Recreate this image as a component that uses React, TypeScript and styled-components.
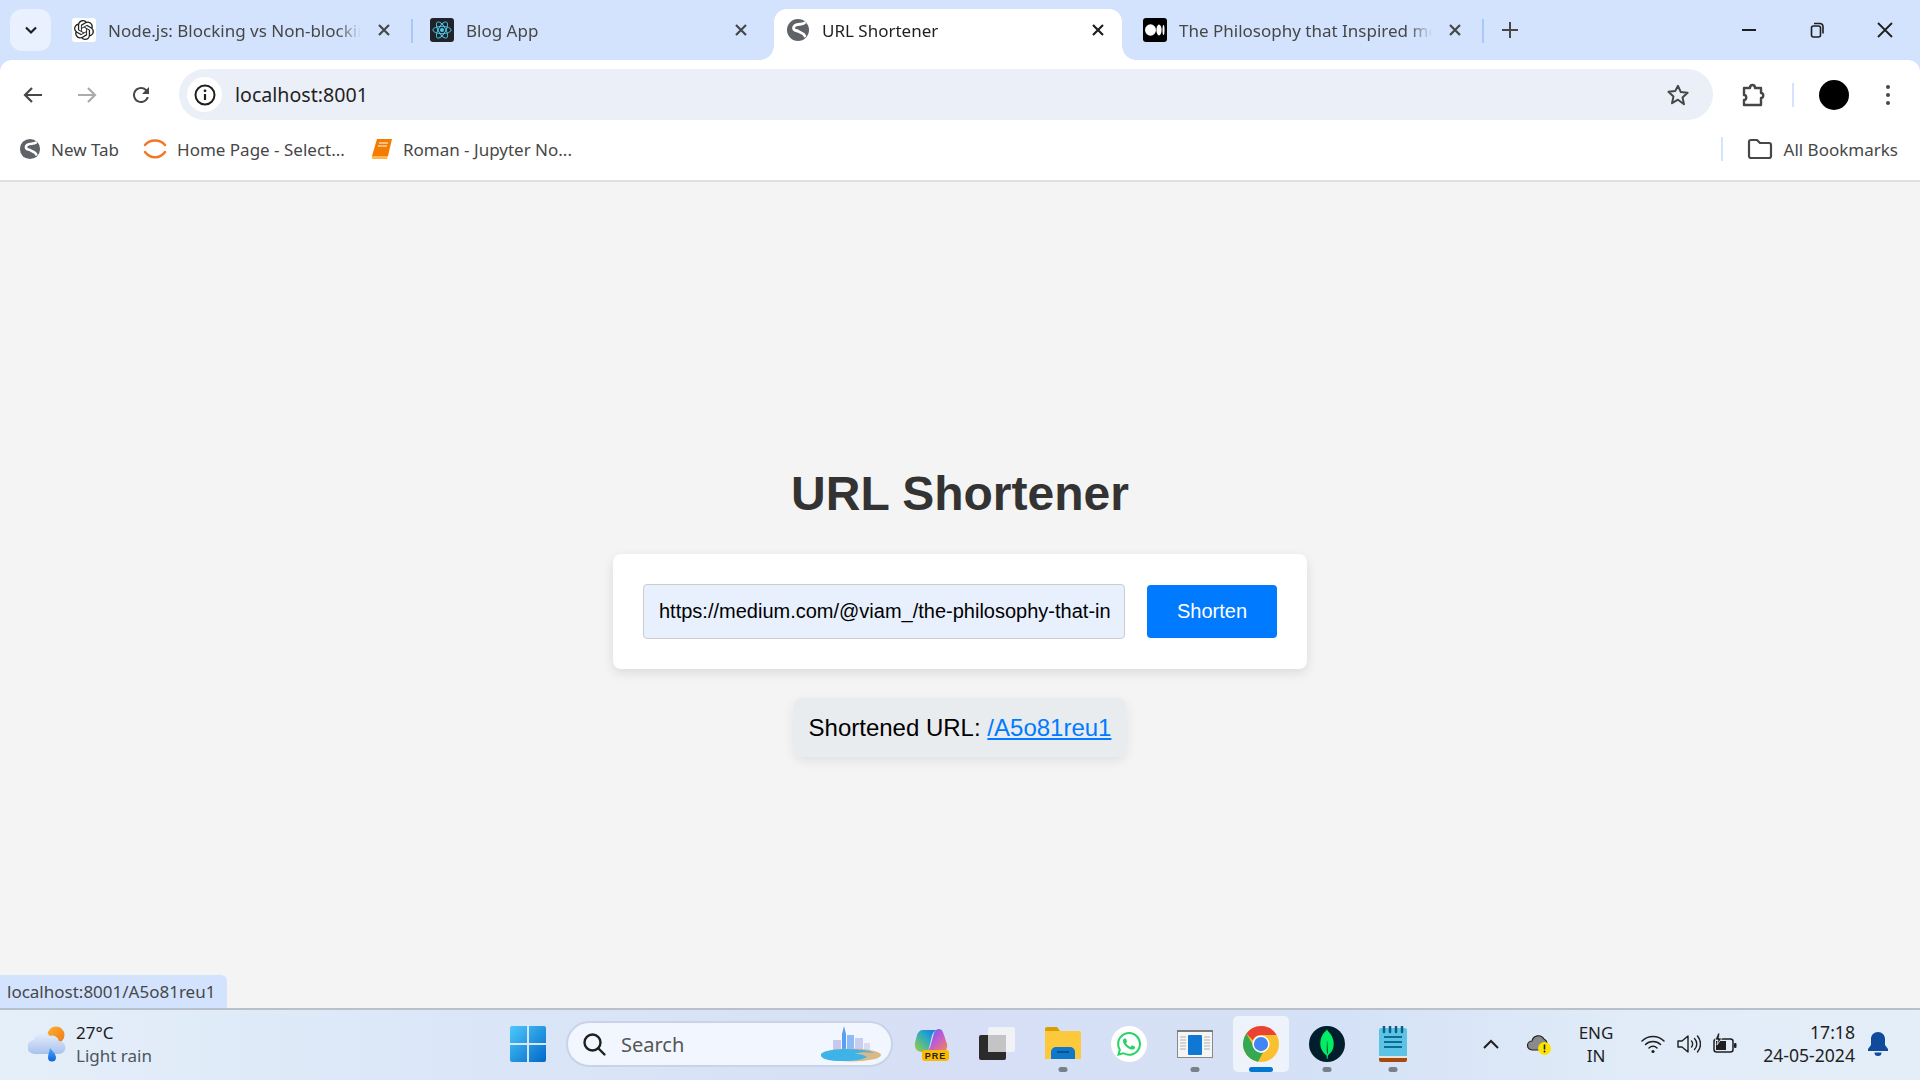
import { ReactNode } from 'react'
import styled, { createGlobalStyle } from 'styled-components'
import { SiOpenai, SiMongodb, SiWhatsapp } from 'react-icons/si'

const UI_FONT = `"Noto Sans", "Open Sans", sans-serif`

const GlobalStyle = createGlobalStyle`
  html, body {
    margin: 0;
    padding: 0;
    height: 100%;
    overflow: hidden;
  }
  * {
    box-sizing: border-box;
  }
`

const Screen = styled.div`
  width: 1920px;
  height: 1080px;
  display: flex;
  flex-direction: column;
  background: #d3e3fd;
  font-family: ${UI_FONT};
`

const TabStrip = styled.div`
  height: 60px;
  display: flex;
  align-items: flex-end;
  padding-left: 60px;
  position: relative;
  flex-shrink: 0;
`

const TabSearchButton = styled.div`
  position: absolute;
  left: 10px;
  top: 9px;
  width: 41px;
  height: 42px;
  border-radius: 12px;
  background: #e9f0fe;
  display: flex;
  align-items: center;
  justify-content: center;
`

const FaviconBox = styled.div<{ $bg: string }>`
  width: 24px;
  height: 24px;
  border-radius: 3px;
  background: ${({ $bg }) => $bg};
  display: flex;
  align-items: center;
  justify-content: center;
  flex-shrink: 0;
`

const Tab = styled.div<{ $active?: boolean; $width: number; $left: number; $right: number; $sep?: boolean }>`
  position: relative;
  width: ${({ $width }) => $width}px;
  height: 51px;
  flex-shrink: 0;
  display: flex;
  align-items: center;
  gap: 12px;
  padding: 0 ${({ $right }) => $right}px 9px ${({ $left }) => $left}px;
  background: ${({ $active }) => ($active ? '#fff' : 'transparent')};
  border-radius: 13px 13px 0 0;

  &::before {
    content: '';
    display: ${({ $sep }) => ($sep ? 'block' : 'none')};
    position: absolute;
    right: 0;
    top: 10px;
    width: 2px;
    height: 24px;
    background: #a8c7fa;
  }

  ${({ $active }) =>
    $active &&
    `
    &::before, &::after {
      content: '';
      display: block;
      position: absolute;
      bottom: 0;
      top: auto;
      width: 14px;
      height: 14px;
      background: radial-gradient(circle at 0 0, transparent 13.5px, #fff 14px);
    }
    &::before { left: -14px; right: auto; }
    &::after {
      right: -14px;
      background: radial-gradient(circle at 100% 0, transparent 13.5px, #fff 14px);
    }
  `}
`

const TabTitle = styled.div<{ $active?: boolean }>`
  flex: 1;
  min-width: 0;
  margin-right: 4px;
  padding-top: 2px;
  overflow: hidden;
  white-space: nowrap;
  font-size: 17px;
  line-height: 24px;
  color: ${({ $active }) => ($active ? '#1f1f1f' : '#474747')};
  mask-image: linear-gradient(to left, transparent 0, #000 24px);
`

const NewTabButton = styled.div`
  width: 26px;
  height: 51px;
  margin-left: 13px;
  padding-bottom: 9px;
  display: flex;
  align-items: center;
  justify-content: center;
`

const WindowControls = styled.div`
  margin-left: auto;
  padding-right: 1px;
  display: flex;
  align-self: stretch;
`

const WindowButton = styled.div`
  width: 68px;
  display: flex;
  align-items: center;
  justify-content: center;
`

const Toolbar = styled.div`
  height: 60px;
  flex-shrink: 0;
  background: #fff;
  border-radius: 12px 12px 0 0;
  display: flex;
  align-items: center;
  padding: 9px 0 0 11px;
`

const NavButton = styled.div`
  width: 44px;
  height: 44px;
  margin-right: 10px;
  display: flex;
  align-items: center;
  justify-content: center;
`

const Omnibox = styled.div`
  width: 1534px;
  height: 51px;
  margin-left: 6px;
  border-radius: 26px;
  background: #ebeff8;
  display: flex;
  align-items: center;
  padding: 0 23px 0 8px;
`

const InfoChip = styled.div`
  width: 35px;
  height: 35px;
  border-radius: 50%;
  background: #fff;
  display: flex;
  align-items: center;
  justify-content: center;
`

const AddressText = styled.div`
  flex: 1;
  margin-left: 13px;
  font-size: 19.6px;
  color: #1f1f1f;
`

const ExtensionSlot = styled.div`
  width: 26px;
  margin-left: 28px;
  display: flex;
`

const ToolbarDivider = styled.div`
  width: 2px;
  height: 24px;
  margin-left: 25px;
  background: #d3e3fd;
`

const Avatar = styled.div`
  width: 30px;
  height: 30px;
  margin-left: 25px;
  border-radius: 50%;
  background: #000;
`

const KebabMenu = styled.div`
  margin-left: 37px;
  display: flex;
  flex-direction: column;
  gap: 4px;

  i {
    display: block;
    width: 4px;
    height: 4px;
    border-radius: 50%;
    background: #474747;
  }
`

const BookmarksBar = styled.div`
  height: 62px;
  flex-shrink: 0;
  background: #fff;
  border-bottom: 2px solid #e0e0e0;
  display: flex;
  align-items: center;
  padding: 0 22px 2px 19px;
  gap: 24px;
`

const Bookmark = styled.div<{ $offset?: number }>`
  display: flex;
  align-items: center;
  gap: 10px;
  margin-left: ${({ $offset }) => $offset ?? 0}px;
  font-size: 17px;
  color: #474747;
  white-space: nowrap;
`

const AllBookmarks = styled(Bookmark)`
  margin-left: auto;
  gap: 11px;
  padding-left: 24px;
  border-left: 2px solid #d3e3fd;
`

const Content = styled.main`
  flex: 1;
  position: relative;
  background: #f4f4f4;
  display: flex;
  flex-direction: column;
  align-items: center;
  padding-top: 284px;
  font-family: 'Liberation Sans', Arial, sans-serif;
`

const Heading = styled.h1`
  margin: 0 0 33px;
  font-size: 48px;
  line-height: 55px;
  font-weight: 700;
  color: #333;
`

const FormCard = styled.div`
  width: 694px;
  height: 115px;
  padding: 30px;
  background: #fff;
  border-radius: 8px;
  box-shadow: 0 4px 12px rgba(0, 0, 0, 0.1);
  display: flex;
  align-items: center;
  justify-content: space-between;
`

const UrlInput = styled.input`
  width: 482px;
  height: 55px;
  padding: 0 14px 0 15px;
  border: 1px solid #ccc;
  border-radius: 4px;
  background: #e8f0fe;
  font-family: inherit;
  font-size: 20px;
  color: #000;
  outline: none;
`

const ShortenButton = styled.button`
  width: 130px;
  height: 53px;
  border: 0;
  border-radius: 4px;
  background: #007bff;
  color: #fff;
  font-family: inherit;
  font-size: 20px;
`

const ResultBox = styled.div`
  margin-top: 29px;
  height: 59px;
  padding: 0 15px;
  display: flex;
  align-items: center;
  gap: 0.28em;
  background: #e9ecef;
  border-radius: 8px;
  box-shadow: 0 4px 12px rgba(0, 0, 0, 0.08);
  font-size: 24px;
  color: #000;
`

const ResultLink = styled.a`
  color: #007bff;
`

const StatusBubble = styled.div`
  position: absolute;
  left: 0;
  bottom: 0;
  width: 227px;
  height: 33px;
  padding-left: 7px;
  background: #d3e3fd;
  border-radius: 0 6px 0 0;
  font-family: ${UI_FONT};
  font-size: 17px;
  line-height: 34px;
  color: #474747;
  white-space: nowrap;
`

const Taskbar = styled.footer`
  height: 72px;
  flex-shrink: 0;
  border-top: 2px solid #b9c0ca;
  padding-bottom: 2px;
  background: linear-gradient(90deg, #e5eff9 0%, #dae6f8 25%, #d6dff5 50%, #d5e1f6 70%, #e1ecf8 85%, #e3eef9 100%);
  display: flex;
  align-items: center;
`

const Weather = styled.div`
  width: 500px;
  padding-left: 28px;
  display: flex;
  align-items: center;
  gap: 10px;
`

const WeatherText = styled.div`
  display: flex;
  flex-direction: column;
  line-height: 23px;
  font-size: 17px;
  margin-bottom: 1px;
`

const Temperature = styled.span`
  color: #1a1a1a;
`

const Condition = styled.span`
  color: #4c5560;
`

const TaskSlot = styled.div<{ $active?: boolean }>`
  position: relative;
  width: 56px;
  height: 56px;
  border-radius: 5px;
  display: flex;
  align-items: center;
  justify-content: center;
  background: ${({ $active }) => ($active ? 'rgba(255, 255, 255, 0.6)' : 'transparent')};
`

const RunningMark = styled.span<{ $active?: boolean }>`
  position: absolute;
  bottom: 0;
  left: 50%;
  transform: translateX(-50%);
  width: ${({ $active }) => ($active ? 24 : 9)}px;
  height: 5px;
  border-radius: 3px;
  background: ${({ $active }) => ($active ? '#0078d4' : '#7a7f8c')};
`

const SearchBox = styled.div`
  width: 327px;
  height: 46px;
  margin-left: 10px;
  border-radius: 23px;
  background: #f2f6fe;
  border: 2px solid #c9d3e8;
  display: flex;
  align-items: center;
  padding: 0 10px 0 13px;
`

const SearchText = styled.span`
  flex: 1;
  margin-left: 14px;
  font-size: 20px;
  color: #555;
`

const AppRow = styled.div`
  margin-left: 10px;
  display: flex;
  gap: 10px;
`

const Tray = styled.div`
  margin-left: 58px;
  flex: 1;
  display: flex;
  align-items: center;
  padding-right: 32px;
`

const TrayIcon = styled.div<{ $gap?: number }>`
  width: 24px;
  margin-left: ${({ $gap }) => $gap ?? 0}px;
  display: flex;
  justify-content: center;
`

const LangBlock = styled.div`
  width: 48px;
  margin-left: 21px;
  display: flex;
  flex-direction: column;
  align-items: center;
  font-size: 17px;
  line-height: 23px;
  color: #1f1f1f;
`

const Clock = styled.div`
  flex: 1;
  display: flex;
  flex-direction: column;
  align-items: flex-end;
  font-size: 17.6px;
  line-height: 23px;
  margin-bottom: 1px;
  color: #1f1f1f;
`

const BellSlot = styled.div`
  width: 20px;
  margin-left: 13px;
  display: flex;
`

const AppDisc = styled.div<{ $bg: string }>`
  width: 36px;
  height: 36px;
  border-radius: 50%;
  background: ${({ $bg }) => $bg};
  display: flex;
  align-items: center;
  justify-content: center;
`

const GlobeIcon = ({ size = 24 }: { size?: number }) => (
  <svg width={size} height={size} viewBox="0 0 24 24">
    <circle cx="12" cy="12" r="11" fill="#5f6368" />
    <path
      d="M18.5 5c-2.5 2-6.5.5-9.5 2.5-2.200 1.500-2 4.500 1 5 2.500.4 3.500 1.800 5.500 2.500 1.500.5 2.800 1.500 3.300 3"
      fill="none"
      stroke="#fff"
      strokeWidth="2.8"
      strokeLinecap="round"
    />
  </svg>
)

const OpenAiFavicon = () => (
  <FaviconBox $bg="#fff">
    <SiOpenai size={20} color="#222" />
  </FaviconBox>
)

const ReactFavicon = () => (
  <FaviconBox $bg="#20232a">
    <svg width="22" height="22" viewBox="-12 -12 24 24" fill="none" stroke="#4fc9e8" strokeWidth="1">
      <circle r="2.2" fill="#4fc9e8" stroke="none" />
      <ellipse rx="10" ry="4" />
      <ellipse rx="10" ry="4" transform="rotate(60)" />
      <ellipse rx="10" ry="4" transform="rotate(120)" />
    </svg>
  </FaviconBox>
)

const MediumFavicon = () => (
  <FaviconBox $bg="#000">
    <svg width="20" height="12" viewBox="0 0 20 12" fill="#fff">
      <ellipse cx="5.5" cy="6" rx="5.5" ry="5.8" />
      <ellipse cx="14" cy="6" rx="2.6" ry="5.4" />
      <ellipse cx="18.5" cy="6" rx="1" ry="5" />
    </svg>
  </FaviconBox>
)

const CloseX = ({ color = '#474747' }: { color?: string }) => (
  <svg width="14" height="14" viewBox="0 0 14 14" stroke={color} strokeWidth="2.2" fill="none">
    <path d="M2 2l10 10M12 2L2 12" />
  </svg>
)

const ChromeLogo = () => (
  <svg width="36" height="36" viewBox="0 0 48 48">
    <circle cx="24" cy="24" r="24" fill="#fbc02d" />
    <path d="M24 0a24 24 0 0 1 20.8 12H24a12 12 0 0 0-11 7L4.5 10A24 24 0 0 1 24 0z" fill="#ea4335" />
    <path d="M4.5 10l9 15.5a12 12 0 0 0 13 10L20 47.7A24 24 0 0 1 4.5 10z" fill="#34a853" />
    <circle cx="24" cy="24" r="11.5" fill="#fff" />
    <circle cx="24" cy="24" r="9.5" fill="#4285f4" />
  </svg>
)

const tabs: { title: string; icon: ReactNode; width: number; left: number; right: number; active?: boolean; sep?: boolean }[] = [
  { title: 'Node.js: Blocking vs Non-blocking', icon: <OpenAiFavicon />, width: 353, left: 12, right: 22, sep: true },
  { title: 'Blog App', icon: <ReactFavicon />, width: 361, left: 17, right: 26 },
  { title: 'URL Shortener', icon: <GlobeIcon />, width: 348, left: 12, right: 17, active: true },
  { title: 'The Philosophy that Inspired me to Write', icon: <MediumFavicon />, width: 362, left: 21, right: 22, sep: true },
]

const appIcons: { key: string; node: ReactNode; mark?: 'dot' | 'active' }[] = [
  {
    key: 'copilot',
    node: (
      <svg width="36" height="36" viewBox="0 0 36 36">
        <defs>
          <linearGradient id="cpA" x1="0" y1="1" x2="1" y2="0">
            <stop offset="0" stopColor="#9fd13c" />
            <stop offset="0.6" stopColor="#27a7c9" />
            <stop offset="1" stopColor="#1a6fe0" />
          </linearGradient>
          <linearGradient id="cpB" x1="0" y1="0" x2="1" y2="1">
            <stop offset="0" stopColor="#2e6fe8" />
            <stop offset="0.5" stopColor="#c05ad8" />
            <stop offset="1" stopColor="#f58a4a" />
          </linearGradient>
        </defs>
        <path d="M10 4h14c-4 1-5 5-6 10l-3 12H9c-5 0-8-4-7-9l2-8c1-3 3-5 6-5z" fill="url(#cpA)" />
        <path d="M26 3c3 0 4 3 5 6l3 9c1 4-1 8-6 8H12c4-1 5-4 6-8l3-11c1-3 3-4 5-4z" fill="url(#cpB)" />
        <rect x="9" y="24" width="27" height="11" rx="3" fill="#fdb900" />
        <text x="22.5" y="33" fontFamily="Liberation Sans, sans-serif" fontWeight="700" fontSize="9" letterSpacing="1" textAnchor="middle" fill="#222">
          PRE
        </text>
      </svg>
    ),
  },
  {
    key: 'taskview',
    node: (
      <svg width="36" height="36" viewBox="0 0 36 36">
        <rect x="0" y="9" width="27" height="25" rx="2" fill="#2b2b2b" />
        <rect x="9" y="1" width="27" height="25" rx="2" fill="#f4f4f6" fillOpacity="0.9" />
        <rect x="9" y="9" width="18" height="17" fill="#c4c4c6" />
      </svg>
    ),
  },
  {
    key: 'explorer',
    mark: 'dot',
    node: (
      <svg width="36" height="34" viewBox="0 0 36 34">
        <path d="M0 2a2 2 0 0 1 2-2h10l3 4h-15z" fill="#d6a000" />
        <path d="M0 4h34a2 2 0 0 1 2 2v26H0z" fill="#fcc93c" />
        <path d="M6 32v-7a5 5 0 0 1 5-5h14a5 5 0 0 1 5 5v7z" fill="#0f78c8" />
        <rect x="12" y="24" width="12" height="2" fill="#0a4f8f" />
      </svg>
    ),
  },
  {
    key: 'whatsapp',
    node: (
      <AppDisc $bg="#fff">
        <SiWhatsapp size={24} color="#25d366" />
      </AppDisc>
    ),
  },
  {
    key: 'window',
    mark: 'dot',
    node: (
      <svg width="36" height="28" viewBox="0 0 36 28">
        <rect x="0.5" y="0.5" width="35" height="27" fill="#f5f5f5" stroke="#8a8a8a" />
        <rect x="0" y="0" width="36" height="2" fill="#7a7a7a" />
        <rect x="11" y="5" width="14" height="20" rx="1" fill="#0f78d4" />
        <path d="M3 7h6M3 10h6M3 13h6M3 16h6M3 19h6M27 7h6M27 10h6M27 13h6M27 16h6M27 19h6" stroke="#c8c8c8" strokeWidth="1.5" />
      </svg>
    ),
  },
  { key: 'chrome', mark: 'active', node: <ChromeLogo /> },
  {
    key: 'mongo',
    mark: 'dot',
    node: (
      <AppDisc $bg="#001e2b">
        <SiMongodb size={30} color="#00ed64" />
      </AppDisc>
    ),
  },
  {
    key: 'notepad',
    mark: 'dot',
    node: (
      <svg width="28" height="36" viewBox="0 0 28 36">
        <rect x="0" y="2" width="28" height="29" rx="2" fill="#5cc3e4" />
        <rect x="0" y="30" width="28" height="2" fill="#e8e4da" />
        <path d="M0 32h28v2a2 2 0 0 1-2 2H2a2 2 0 0 1-2-2z" fill="#a8480c" />
        <path d="M5 0v6M11 0v6M17 0v6M23 0v6" stroke="#0b5f83" strokeWidth="2.5" strokeLinecap="round" />
        <path d="M5 11h18M5 16h18M5 21h18" stroke="#0b6d96" strokeWidth="2" />
      </svg>
    ),
  },
]

const App = () => {
  return (
    <Screen>
      <GlobalStyle />
      <TabStrip>
        <TabSearchButton>
          <svg width="16" height="16" viewBox="0 0 16 16" fill="none" stroke="#1f1f1f" strokeWidth="2.2">
            <path d="M3 5.5l5 5 5-5" />
          </svg>
        </TabSearchButton>
        {tabs.map((tab) => (
          <Tab key={tab.title} $active={tab.active} $width={tab.width} $left={tab.left} $right={tab.right} $sep={tab.sep}>
            {tab.icon}
            <TabTitle $active={tab.active}>{tab.title}</TabTitle>
            <CloseX color={tab.active ? '#1f1f1f' : '#474747'} />
          </Tab>
        ))}
        <NewTabButton>
          <svg width="16" height="16" viewBox="0 0 16 16" stroke="#474747" strokeWidth="2">
            <path d="M8 0v16M0 8h16" />
          </svg>
        </NewTabButton>
        <WindowControls>
          <WindowButton>
            <svg width="16" height="16" viewBox="0 0 16 16" stroke="#1f1f1f" strokeWidth="2">
              <path d="M1 8h14" />
            </svg>
          </WindowButton>
          <WindowButton>
            <svg width="16" height="16" viewBox="0 0 16 16" stroke="#1f1f1f" strokeWidth="1.6" fill="none">
              <rect x="2.5" y="4" width="9" height="11" rx="2" />
              <path d="M5 1.5h6a3 3 0 0 1 3 3v7" />
            </svg>
          </WindowButton>
          <WindowButton>
            <svg width="18" height="18" viewBox="0 0 18 18" stroke="#1f1f1f" strokeWidth="1.8">
              <path d="M2 2l14 14M16 2L2 16" />
            </svg>
          </WindowButton>
        </WindowControls>
      </TabStrip>

      <Toolbar>
        <NavButton>
          <svg width="24" height="24" viewBox="0 0 24 24" fill="none" stroke="#474747" strokeWidth="2.2">
            <path d="M21 12H4M11 5l-7 7 7 7" />
          </svg>
        </NavButton>
        <NavButton>
          <svg width="24" height="24" viewBox="0 0 24 24" fill="none" stroke="#a9abae" strokeWidth="2.2">
            <path d="M3 12h17M13 5l7 7-7 7" />
          </svg>
        </NavButton>
        <NavButton>
          <svg width="24" height="24" viewBox="0 0 24 24" fill="#474747">
            <path d="M17.65 6.35A7.958 7.958 0 0 0 12 4c-4.42 0-7.99 3.58-7.99 8s3.57 8 7.99 8c3.73 0 6.84-2.55 7.73-6h-2.08A5.99 5.99 0 0 1 12 18c-3.31 0-6-2.69-6-6s2.69-6 6-6c1.66 0 3.14.69 4.22 1.78L13 11h7V4l-2.35 2.35z" />
          </svg>
        </NavButton>
        <Omnibox>
          <InfoChip>
            <svg width="22" height="22" viewBox="0 0 22 22" fill="none">
              <circle cx="11" cy="11" r="9.5" stroke="#1f1f1f" strokeWidth="2" />
              <path d="M11 10v6" stroke="#1f1f1f" strokeWidth="2.2" />
              <circle cx="11" cy="6.8" r="1.4" fill="#1f1f1f" />
            </svg>
          </InfoChip>
          <AddressText>localhost:8001</AddressText>
          <svg width="24" height="24" viewBox="0 0 24 24" fill="none" stroke="#474747" strokeWidth="2" strokeLinejoin="round">
            <path d="M12 2.8l2.8 6.3 6.8.7-5.1 4.6 1.5 6.8L12 16.7l-6 3.5 1.5-6.8-5.1-4.6 6.8-.7z" />
          </svg>
        </Omnibox>
        <ExtensionSlot>
          <svg width="26" height="26" viewBox="0 0 26 26" fill="none" stroke="#474747" strokeWidth="2.4" strokeLinejoin="round">
            <path d="M3 6h6c0-4 5-4 5 0h6v5c3 0 3 5 0 5v7H3v-5c3 0 3-5 0-5z" />
          </svg>
        </ExtensionSlot>
        <ToolbarDivider />
        <Avatar />
        <KebabMenu>
          <i />
          <i />
          <i />
        </KebabMenu>
      </Toolbar>

      <BookmarksBar>
        <Bookmark>
          <GlobeIcon size={22} />
          New Tab
        </Bookmark>
        <Bookmark>
          <svg width="24" height="24" viewBox="0 0 24 24" fill="none" stroke="#f37626" strokeWidth="2.4" strokeLinecap="round">
            <path d="M2 8c5-6 15-6 20 0" />
            <path d="M2 15c5 7 15 7 20 0" />
          </svg>
          Home Page - Select...
        </Bookmark>
        <Bookmark $offset={2}>
          <svg width="22" height="24" viewBox="0 0 22 24">
            <path d="M6 2h15l-4 17H1z" fill="#f57c00" />
            <path d="M1 19h16l-1 3H2c-1.5 0-1.5-3-1-3z" fill="#ffb74d" />
            <path d="M8 6h9M7 9h9" stroke="#fff" strokeWidth="1.2" />
          </svg>
          Roman - Jupyter No...
        </Bookmark>
        <AllBookmarks>
          <svg width="26" height="24" viewBox="0 0 26 24" fill="none" stroke="#474747" strokeWidth="2.2" strokeLinejoin="round">
            <path d="M2 5a2 2 0 0 1 2-2h6l3 3h9a2 2 0 0 1 2 2v11a2 2 0 0 1-2 2H4a2 2 0 0 1-2-2z" />
          </svg>
          All Bookmarks
        </AllBookmarks>
      </BookmarksBar>

      <Content>
        <Heading>URL Shortener</Heading>
        <FormCard>
          <UrlInput readOnly value="https://medium.com/@viam_/the-philosophy-that-inspired-me" />
          <ShortenButton>Shorten</ShortenButton>
        </FormCard>
        <ResultBox>
          Shortened URL: <ResultLink href="#">/A5o81reu1</ResultLink>
        </ResultBox>
        <StatusBubble>localhost:8001/A5o81reu1</StatusBubble>
      </Content>

      <Taskbar>
        <Weather>
          <svg width="38" height="38" viewBox="0 0 38 38">
            <defs>
              <linearGradient id="sun" x1="0" y1="0" x2="1" y2="1">
                <stop offset="0" stopColor="#fbb32d" />
                <stop offset="1" stopColor="#f0761a" />
              </linearGradient>
              <linearGradient id="cloud" x1="0" y1="0" x2="0" y2="1">
                <stop offset="0" stopColor="#e6eefb" />
                <stop offset="1" stopColor="#a9c2ee" />
              </linearGradient>
              <linearGradient id="drop" x1="0" y1="0" x2="0" y2="1">
                <stop offset="0" stopColor="#4aa8f5" />
                <stop offset="1" stopColor="#0f62e0" />
              </linearGradient>
            </defs>
            <circle cx="28" cy="10" r="8.500" fill="url(#sun)" />
            <path d="M7 29a7 7 0 0 1-1-14 9 9 0 0 1 16-4 7 7 0 0 1 9 5 6.500 6.500 0 0 1 0 13z" fill="url(#cloud)" />
            <path d="M22 23c2.500 3 6 6 6 9.500a4 4 0 0 1-8 0c0-3 1.500-6 2-9.500z" fill="url(#drop)" />
          </svg>
          <WeatherText>
            <Temperature>27°C</Temperature>
            <Condition>Light rain</Condition>
          </WeatherText>
        </Weather>
        <TaskSlot>
          <svg width="36" height="36" viewBox="0 0 36 36">
            <defs>
              <linearGradient id="winLogo" x1="0" y1="0" x2="1" y2="1">
                <stop offset="0" stopColor="#4cc9fb" />
                <stop offset="1" stopColor="#0068c8" />
              </linearGradient>
            </defs>
            <path d="M2 0h15v17H0V2a2 2 0 0 1 2-2zM19 0h15a2 2 0 0 1 2 2v15H19zM0 19h17v17H2a2 2 0 0 1-2-2zM19 19h17v15a2 2 0 0 1-2 2H19z" fill="url(#winLogo)" />
          </svg>
        </TaskSlot>
        <SearchBox>
          <svg width="26" height="26" viewBox="0 0 26 26" fill="none" stroke="#1f1f1f" strokeWidth="2.4">
            <circle cx="11.5" cy="11.5" r="8" />
            <path d="M17.5 17.5l6 6" strokeLinecap="round" />
          </svg>
          <SearchText>Search</SearchText>
          <svg width="60" height="36" viewBox="0 0 60 36">
            <rect x="12" y="14" width="8" height="14" fill="#c6c8ee" />
            <path d="M21 26V8l2-8 2 8v18z" fill="#5b9df0" />
            <rect x="26" y="9" width="7" height="17" fill="#8cbcf5" />
            <rect x="34" y="12" width="8" height="14" fill="#c9cdf0" />
            <rect x="43" y="17" width="6" height="9" fill="#d9dbf2" />
            <ellipse cx="30" cy="29" rx="30" ry="6.5" fill="#d9b98a" />
            <path d="M0 29c0-4 14-6 26-6 10 0 20 1 28 4-8-1-16-1-20 1 6 0 9 1 12 3-6 3-12 4-24 4C8 35 0 33 0 29z" fill="#3db3e8" />
          </svg>
        </SearchBox>
        <AppRow>
          {appIcons.map((app) => (
            <TaskSlot key={app.key} $active={app.mark === 'active'}>
              {app.node}
              {app.mark && <RunningMark $active={app.mark === 'active'} />}
            </TaskSlot>
          ))}
        </AppRow>
        <Tray>
          <TrayIcon>
            <svg width="18" height="12" viewBox="0 0 18 12" fill="none" stroke="#1f1f1f" strokeWidth="2">
              <path d="M2 10l7-7 7 7" />
            </svg>
          </TrayIcon>
          <TrayIcon $gap={24}>
            <svg width="24" height="22" viewBox="0 0 24 22">
              <path d="M5 17a4.5 4.5 0 0 1 0-9 6.5 6.5 0 0 1 12-2 5 5 0 0 1 3 4l-6 7z" fill="#8a8a8a" stroke="#222" strokeWidth="1.2" />
              <circle cx="17.5" cy="15.5" r="6.5" fill="#fde300" />
              <path d="M17.5 11.5v5" stroke="#222" strokeWidth="1.6" />
              <circle cx="17.5" cy="18.5" r="0.9" fill="#222" />
            </svg>
          </TrayIcon>
          <LangBlock>
            <span>ENG</span>
            <span>IN</span>
          </LangBlock>
          <TrayIcon $gap={21}>
            <svg width="24" height="20" viewBox="0 0 24 20" fill="none" stroke="#1f1f1f" strokeWidth="1.5" strokeLinecap="round">
              <path d="M1 7c6-6 16-6 22 0" />
              <path d="M4.5 10.5c4-4 11-4 15 0" />
              <path d="M8 14c2.2-2.2 5.8-2.2 8 0" />
              <circle cx="12" cy="17.5" r="1.6" fill="#1f1f1f" stroke="none" />
            </svg>
          </TrayIcon>
          <TrayIcon $gap={12}>
            <svg width="24" height="22" viewBox="0 0 24 22" fill="none" stroke="#1f1f1f" strokeWidth="1.4" strokeLinejoin="round" strokeLinecap="round">
              <path d="M1 8h4l6-5v16l-6-5H1z" />
              <path d="M14.5 8c1.5 1.5 1.5 4.5 0 6" />
              <path d="M17.5 5.5c3 3 3 8 0 11" />
              <path d="M20.5 3c4 4.5 4 11.5 0 16" />
            </svg>
          </TrayIcon>
          <TrayIcon $gap={12}>
            <svg width="24" height="22" viewBox="0 0 24 22" fill="none">
              <rect x="1" y="6" width="19" height="13" rx="2.5" stroke="#1f1f1f" strokeWidth="1.5" />
              <rect x="3" y="8" width="10" height="9" fill="#1f1f1f" />
              <rect x="21" y="10" width="2.5" height="5" rx="1" fill="#1f1f1f" />
              <path d="M5 0L2 7h3l-1 5 5-7H6l1-5z" fill="#1f1f1f" stroke="#e2edf8" strokeWidth="0.8" />
            </svg>
          </TrayIcon>
          <Clock>
            <span>17:18</span>
            <span>24-05-2024</span>
          </Clock>
          <BellSlot>
            <svg width="20" height="24" viewBox="0 0 20 24" fill="#0f4a9c">
              <path d="M10 0c4 0 7 3 7 7v6l3 4v2H0v-2l3-4V7c0-4 3-7 7-7z" />
              <path d="M6.5 20.5h7a3.5 3.5 0 0 1-7 0z" />
            </svg>
          </BellSlot>
        </Tray>
      </Taskbar>
    </Screen>
  )
}

export default App
